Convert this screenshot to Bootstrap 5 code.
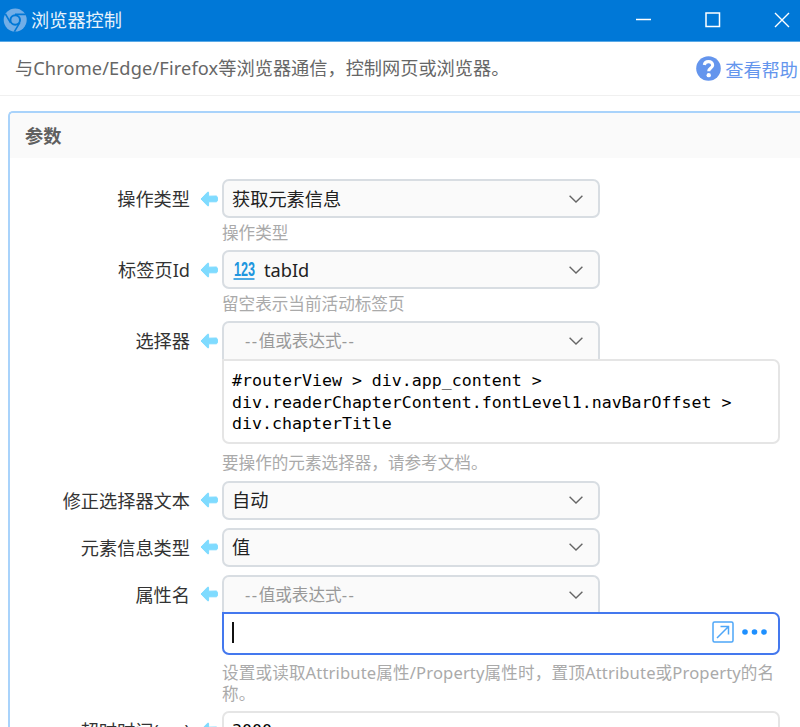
<!DOCTYPE html>
<html lang="zh-CN">
<head>
<meta charset="utf-8">
<meta name="viewport" content="width=device-width, initial-scale=1">
<title>浏览器控制</title>
<link href="https://cdn.jsdelivr.net/npm/bootstrap@5.3.0/dist/css/bootstrap.min.css" rel="stylesheet">
<style>
body{font-family:"Noto Sans","Noto Sans CJK SC",sans-serif;font-size:18.2px;line-height:24px;color:#333;height:727px;background:#fff}
.cj{font-family:"Noto Sans CJK SC",sans-serif}
.titlebar{height:42px;background:#0078d7;border-bottom:1px solid #5aa9e6;padding:0 10px 2px 3px}
.titlebar .caption{margin:-2px 0 0 4px;color:#e6f2fc}
.win-controls{gap:53px}
.intro{height:54px;border-bottom:1px solid #f0f0f0;color:#666;padding:0 2px 2px 15px}
.intro .latin{letter-spacing:.14px}
.help{color:#6495ed;gap:4px;text-decoration:none;margin-top:2px}
.params{margin:15px 0 0 8px;border:2px solid #a9d3fb;border-right:0;border-bottom:0;border-radius:5px 0 0 0;height:640px}
.params-head{height:45px;background:#fafafa;color:#606060;font-weight:700;padding:0 15px 2px;border-radius:4px 0 0 0}
.params-body{padding-top:21px}
.field{display:grid;grid-template-columns:180px 32px 558px;align-items:start}
.field>label{text-align:right;height:39px;line-height:40px;white-space:nowrap}
.field>.arrow{height:39px;padding-left:10px}
.h71{height:71px}.h160{height:160px}.h159{height:159.5px}.h47{height:47px}.h136{height:136px}
.combo{width:378px;height:39px;border:2px solid #d8dde2;border-radius:7px;background:#fafafa;color:#222;padding:0 15px 0 8px}
.combo.joined{border-bottom:0;border-radius:7px 7px 0 0;height:38px}
.combo.empty{color:#999;padding-left:21px;font-size:16.6px}
.combo .dash{letter-spacing:1.5px}
.hint{font-size:16.6px;line-height:21.5px;color:#aaa;padding-top:4px}
.hint.low{padding-top:8px}
.hint.spread{letter-spacing:.13px;padding-top:7px;white-space:nowrap}
.code{height:85px;border:2px solid #e5e5e5;border-radius:0 7px 7px 7px;padding:9px 8px;font:16.6px/21.5px "DejaVu Sans Mono",monospace;color:#000;white-space:pre;background:#fff}
.entry{height:43px;border:2px solid #4478ee;border-radius:0 7px 7px 7px;padding:0 10px 2px 8px;margin-top:-1px;background:#fff}
.caret{width:2px;height:21px;background:#111}
.plain{height:39px;border:2px solid #e5e5e5;border-radius:7px;line-height:35px;padding:0 8px;font-family:"DejaVu Sans Mono",monospace;font-size:16.6px;color:#000}
.num-icon{margin-right:8px}
</style>
</head>
<body class="overflow-hidden">
<svg class="d-none">
<symbol id="arrow" viewBox="0 0 18 16"><path d="M1 8 7.6 1.2Q8.6.5 8.6 1.8V5.2L16.3 5Q17.5 5 17.5 8T16.3 10.8L8.6 10.8v3.4Q8.6 15.5 7.6 14.8Z" fill="#7fdbff" stroke="#7fdbff" stroke-width="1" stroke-linejoin="round"/></symbol>
<symbol id="chev" viewBox="0 0 14 8"><path d="M.6.7 7 7 13.4.7" fill="none" stroke="#666" stroke-width="1.4"/></symbol>
</svg>
<header class="titlebar d-flex align-items-center justify-content-between">
  <div class="d-flex align-items-center">
    <svg width="24" height="24" viewBox="0 0 24 24"><circle cx="12.2" cy="12" r="11.5" fill="#72aee7"/><circle cx="12.2" cy="12" r="4.8" fill="#72aee7" stroke="#0078d7" stroke-width="2"/><path d="M12 6.4H22.8M7.6 14.8 2.4 6M16.8 14.6 11.4 23.6" fill="none" stroke="#0078d7" stroke-width="1.6"/></svg>
    <span class="caption cj">浏览器控制</span>
  </div>
  <div class="d-flex align-items-center win-controls">
    <svg width="16" height="16"><path d="M0 7.5H15" stroke="#fff" stroke-width="1.5"/></svg>
    <svg width="16" height="16"><path d="M1 1H14.5V14.5H1Z" fill="none" stroke="#fff" stroke-width="1.5"/></svg>
    <svg width="16" height="16"><path d="M1 1 15 15M15 1 1 15" stroke="#fff" stroke-width="1.4"/></svg>
  </div>
</header>
<div class="intro d-flex align-items-center justify-content-between text-nowrap">
  <span>与<span class="latin">Chrome/Edge/Firefox</span>等浏览器通信，控制网页或浏览器。</span>
  <a class="help cj d-flex align-items-center" href="#">
    <svg width="25" height="25" viewBox="0 0 24 24"><circle cx="12" cy="12" r="11.8" fill="#6495ed"/><path d="M8 8.6C8.5 4.2 16 4.4 16 8.8 16 11.5 12.2 11.4 12.2 14.6" fill="none" stroke="#fff" stroke-width="3"/><circle cx="12.2" cy="18.4" r="2.1" fill="#fff"/></svg>
    <span>查看帮助</span>
  </a>
</div>
<main class="params">
  <div class="params-head d-flex align-items-center cj">参数</div>
  <div class="params-body">
    <div class="field h71">
      <label>操作类型</label>
      <div class="arrow d-flex align-items-center"><svg width="18" height="16"><use href="#arrow"/></svg></div>
      <div>
        <div class="combo d-flex align-items-center justify-content-between"><span>获取元素信息</span><svg width="14" height="8"><use href="#chev"/></svg></div>
        <div class="hint">操作类型</div>
      </div>
    </div>
    <div class="field h71">
      <label>标签页Id</label>
      <div class="arrow d-flex align-items-center"><svg width="18" height="16"><use href="#arrow"/></svg></div>
      <div>
        <div class="combo d-flex align-items-center justify-content-between">
          <span class="d-flex align-items-center"><svg class="num-icon" width="24" height="20"><text x="2" y="16" textLength="21" lengthAdjust="spacingAndGlyphs" font-family="Liberation Sans" font-weight="700" font-size="21" fill="#2196de">123</text><path d="M1.5 19H22.5" stroke="#2196de" stroke-width="1.6"/></svg>tabId</span>
          <svg width="14" height="8"><use href="#chev"/></svg>
        </div>
        <div class="hint">留空表示当前活动标签页</div>
      </div>
    </div>
    <div class="field h159">
      <label>选择器</label>
      <div class="arrow d-flex align-items-center"><svg width="18" height="16"><use href="#arrow"/></svg></div>
      <div>
        <div class="combo joined empty d-flex align-items-center justify-content-between"><span><span class="dash">--</span>值或表达式<span class="dash">--</span></span><svg width="14" height="8"><use href="#chev"/></svg></div>
        <div class="code">#routerView &gt; div.app_content &gt;
div.readerChapterContent.fontLevel1.navBarOffset &gt;
div.chapterTitle</div>
        <div class="hint low">要操作的元素选择器，请参考文档。</div>
      </div>
    </div>
    <div class="field h47">
      <label>修正选择器文本</label>
      <div class="arrow d-flex align-items-center"><svg width="18" height="16"><use href="#arrow"/></svg></div>
      <div class="combo d-flex align-items-center justify-content-between"><span>自动</span><svg width="14" height="8"><use href="#chev"/></svg></div>
    </div>
    <div class="field h47">
      <label>元素信息类型</label>
      <div class="arrow d-flex align-items-center"><svg width="18" height="16"><use href="#arrow"/></svg></div>
      <div class="combo d-flex align-items-center justify-content-between"><span>值</span><svg width="14" height="8"><use href="#chev"/></svg></div>
    </div>
    <div class="field h136">
      <label>属性名</label>
      <div class="arrow d-flex align-items-center"><svg width="18" height="16"><use href="#arrow"/></svg></div>
      <div>
        <div class="combo joined empty d-flex align-items-center justify-content-between"><span><span class="dash">--</span>值或表达式<span class="dash">--</span></span><svg width="14" height="8"><use href="#chev"/></svg></div>
        <div class="entry d-flex align-items-center justify-content-between">
          <div class="caret"></div>
          <div class="d-flex align-items-center gap-2">
            <svg width="22" height="22" fill="none" stroke="#4da6f8" stroke-width="1.5"><rect x="1" y="1" width="20" height="20" rx="1.5"/><path d="M5 17 16.5 5.5M8.5 5.5H16.5V13.5"/></svg>
            <svg width="26" height="6" fill="#1e90ff"><circle cx="3" cy="3" r="2.8"/><circle cx="12.5" cy="3" r="2.8"/><circle cx="22" cy="3" r="2.8"/></svg>
          </div>
        </div>
        <div class="hint spread">设置或读取Attribute属性/Property属性时，置顶Attribute或Property的名<br>称。</div>
      </div>
    </div>
    <div class="field">
      <label>超时时间(ms)</label>
      <div class="arrow d-flex align-items-center"><svg width="18" height="16"><use href="#arrow"/></svg></div>
      <div class="plain">3000</div>
    </div>
  </div>
</main>
<script src="https://cdn.jsdelivr.net/npm/bootstrap@5.3.0/dist/js/bootstrap.bundle.min.js"></script>
</body>
</html>
